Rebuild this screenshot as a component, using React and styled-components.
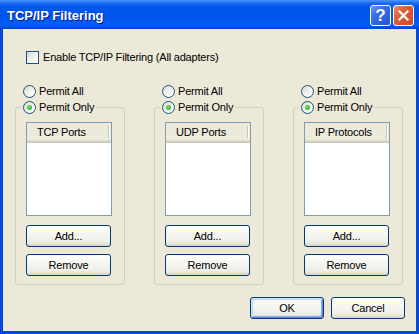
import React from "react";
import styled, { createGlobalStyle } from "styled-components";

const GlobalStyle = createGlobalStyle`
  body {
    margin: 0;
    background: #ffffff;
  }
`;

const Window = styled.div`
  width: 419px;
  height: 334px;
  display: flex;
  flex-direction: column;
  font-family: "Liberation Sans", Arial, sans-serif;
  font-size: 11px;
  letter-spacing: -0.2px;
  color: #000;
`;

const TitleBar = styled.div`
  height: 29px;
  box-sizing: border-box;
  padding: 2px 5px 0 7px;
  display: flex;
  align-items: center;
  background: linear-gradient(
    180deg,
    #4a96fa 0%,
    #1f6cf0 10%,
    #0058ee 22%,
    #0054e8 55%,
    #005ef5 82%,
    #0153e2 93%,
    #0040c6 100%
  );
`;

const Title = styled.span`
  flex: 1;
  color: #fff;
  font-size: 13px;
  font-weight: bold;
  letter-spacing: 0;
  text-shadow: 1px 1px 0 #0c1a8a;
`;

const CaptionButtons = styled.div`
  display: flex;
  gap: 2px;
`;

const CaptionButton = styled.div`
  width: 21px;
  height: 21px;
  box-sizing: border-box;
  border: 1px solid #fff;
  border-radius: 3px;
  display: flex;
  align-items: center;
  justify-content: center;
  color: #fff;
  font-size: 17px;
  font-weight: bold;
  letter-spacing: 0;
  background: ${(p) =>
    p.$close
      ? "linear-gradient(135deg, #f08a6a 0%, #e0603b 35%, #d2451f 100%)"
      : "linear-gradient(135deg, #6a9bfa 0%, #3a6ee8 35%, #2352d6 100%)"};
`;

const Frame = styled.div`
  flex: 1;
  background: #ece9d8;
  border: 3px solid #0848d8;
  border-top: 0;
  padding: 22px 11px 0 12px;
  display: flex;
  flex-direction: column;
`;

const Label = styled.label`
  display: flex;
  align-items: center;
  gap: 3px;
  line-height: 13px;
  white-space: nowrap;
`;

const CheckRow = styled(Label)`
  margin-left: 11px;
  gap: 4px;
`;

const CheckBox = styled.span`
  width: 13px;
  height: 13px;
  box-sizing: border-box;
  border: 1px solid #1c5180;
  background: linear-gradient(135deg, #dcdcd7 0%, #f4f4f0 60%, #ffffff 100%);
`;

const Radio = styled.span`
  width: 13px;
  height: 13px;
  box-sizing: border-box;
  border-radius: 50%;
  border: 1px solid #1c5180;
  background: linear-gradient(135deg, #dcdcd7 0%, #f4f4f0 60%, #ffffff 100%);
  display: flex;
  align-items: center;
  justify-content: center;

  &::after {
    content: "";
    width: 5px;
    height: 5px;
    border-radius: 50%;
    background: radial-gradient(circle at 40% 40%, #6ee06a, #21a121);
    display: ${(p) => (p.$checked ? "block" : "none")};
  }
`;

const Columns = styled.div`
  margin-top: 21px;
  display: grid;
  grid-template-columns: 110px 110px 110px;
  column-gap: 29px;
`;

const Column = styled.div`
  display: flex;
  flex-direction: column;
`;

const RadioRow = styled(Label)`
  margin-left: 8px;
`;

const Group = styled.fieldset`
  margin: 3px 0 0 0;
  padding: 0;
  min-width: 0;
  border: 1px solid #d0d0bf;
  border-radius: 3px;
`;

const Legend = styled.legend`
  margin-left: 5px;
  padding: 0 2px;
`;

const GroupBody = styled.div`
  padding: 8px 0 8px 10px;
  display: flex;
  flex-direction: column;
`;

const ListBox = styled.div`
  width: 86px;
  height: 94px;
  box-sizing: border-box;
  border: 1px solid #7f9db9;
  background: #fff;
`;

const ListHeader = styled.div`
  height: 20px;
  display: flex;
  background: #ebeadb;
  box-shadow: inset 0 -1px 0 #cbc7b8, inset 0 -2px 0 #d6d2c2,
    inset 0 -3px 0 #e2decd;
`;

const HeaderCell = styled.div`
  width: 82px;
  box-sizing: border-box;
  padding: 0 0 3px 10px;
  display: flex;
  align-items: center;
  position: relative;

  &::after {
    content: "";
    position: absolute;
    right: 0;
    top: 3px;
    bottom: 5px;
    width: 1px;
    background: #c7c5b2;
    box-shadow: 1px 0 0 #fff;
  }
`;

const Button = styled.button`
  width: ${(p) => p.$width || 85}px;
  height: 22px;
  padding: 0;
  font: inherit;
  letter-spacing: inherit;
  color: #000;
  border: 1px solid #003c74;
  border-radius: 3px;
  background: linear-gradient(
    180deg,
    #ffffff 0%,
    #f7f6f2 35%,
    #eeede6 80%,
    #d9d4c9 100%
  );
  box-shadow: ${(p) =>
    p.$default
      ? "inset 1px 1px 0 #cee7ff, inset -1px -1px 0 #6982ee, inset 2px 2px 0 #bcd4f6, inset -2px -2px 0 #89ade4"
      : "none"};
`;

const AddButton = styled(Button)`
  margin-top: 9px;
`;

const RemoveButton = styled(Button)`
  margin-top: 7px;
`;

const Footer = styled.div`
  margin-top: 12px;
  display: flex;
  justify-content: flex-end;
  gap: 7px;
`;

const lists = ["TCP Ports", "UDP Ports", "IP Protocols"];

function CloseGlyph() {
  return (
    <svg width="11" height="11" viewBox="0 0 11 11">
      <path d="M1.5 1.5 L9.5 9.5 M9.5 1.5 L1.5 9.5" stroke="#fff" strokeWidth="2.2" strokeLinecap="square" />
    </svg>
  );
}

export default function App() {
  return (
    <Window>
      <GlobalStyle />
      <TitleBar>
        <Title>TCP/IP Filtering</Title>
        <CaptionButtons>
          <CaptionButton>?</CaptionButton>
          <CaptionButton $close>
            <CloseGlyph />
          </CaptionButton>
        </CaptionButtons>
      </TitleBar>
      <Frame>
        <CheckRow>
          <CheckBox />
          Enable TCP/IP Filtering (All adapters)
        </CheckRow>
        <Columns>
          {lists.map((name) => (
            <Column key={name}>
              <RadioRow>
                <Radio />
                Permit All
              </RadioRow>
              <Group>
                <Legend>
                  <Label>
                    <Radio $checked />
                    Permit Only
                  </Label>
                </Legend>
                <GroupBody>
                  <ListBox>
                    <ListHeader>
                      <HeaderCell>{name}</HeaderCell>
                    </ListHeader>
                  </ListBox>
                  <AddButton>Add...</AddButton>
                  <RemoveButton>Remove</RemoveButton>
                </GroupBody>
              </Group>
            </Column>
          ))}
        </Columns>
        <Footer>
          <Button $width={74} $default>
            OK
          </Button>
          <Button $width={74}>Cancel</Button>
        </Footer>
      </Frame>
    </Window>
  );
}
